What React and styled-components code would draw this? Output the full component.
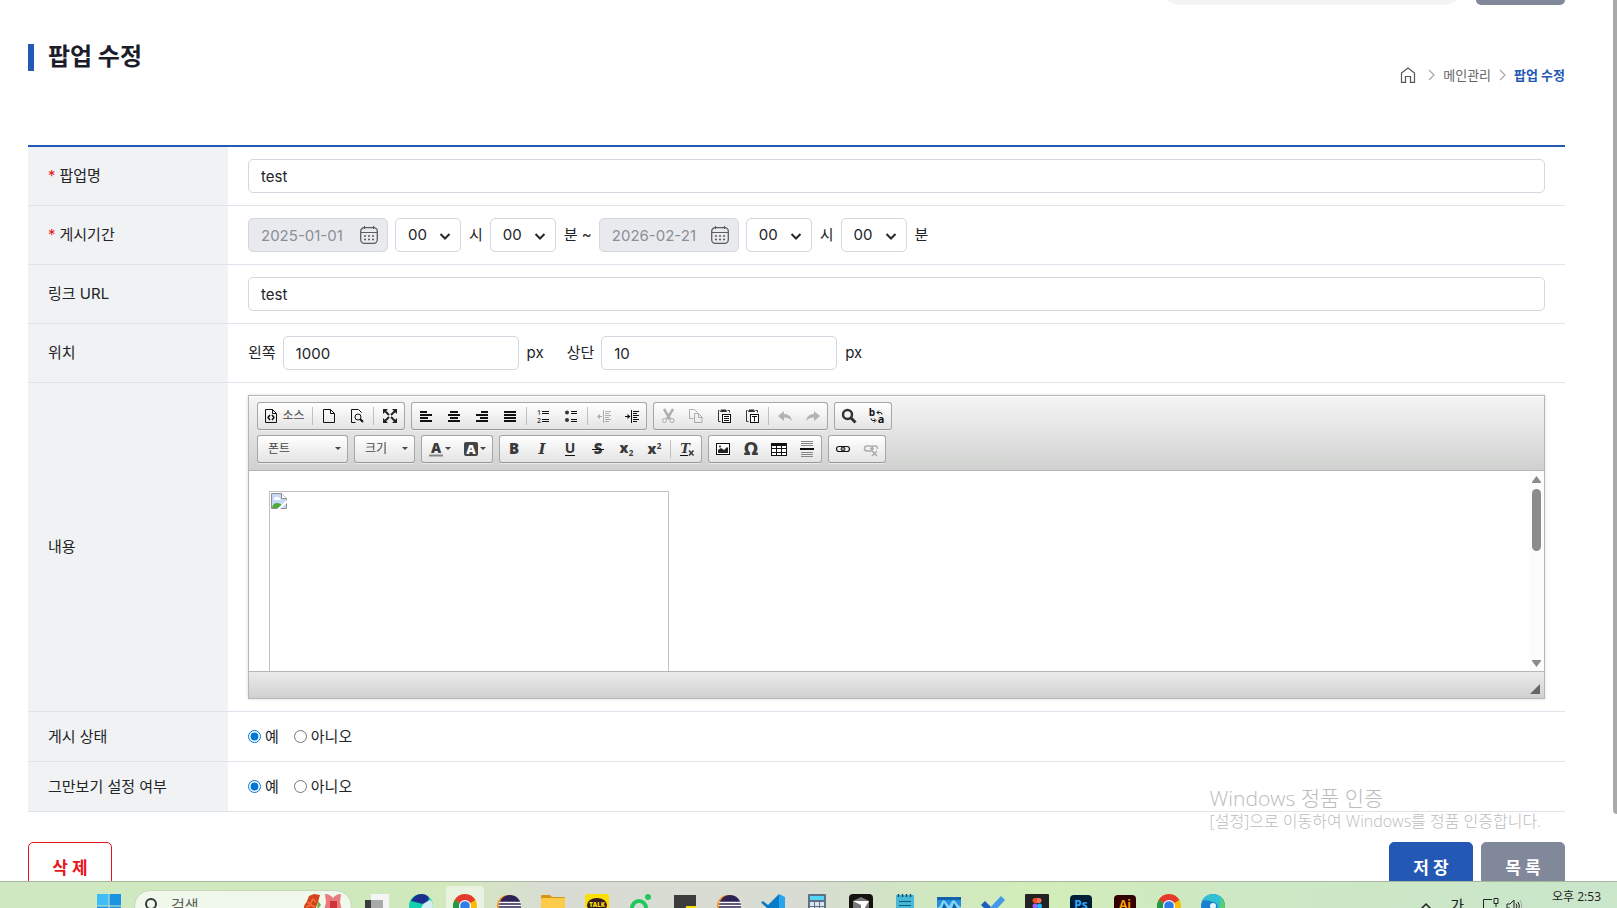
import React, { useState } from "react";
import styled, { createGlobalStyle, css } from "styled-components";

const color = {
    blue: "#2358b5",
    red: "#e8141c",
    slate: "#81889a",
    text: "#222428",
    line: "#dfe3ec",
    field: "#d2d6de",
    label: "#f1f2f4",
};

const Global = createGlobalStyle`
    *, *::before, *::after { box-sizing: border-box; }
    body {
        margin: 0;
        overflow: hidden;
        background: #fff;
        color: ${color.text};
        font-family: Inter, "Noto Sans CJK KR", sans-serif;
        font-size: 15px;
        line-height: 20px;
    }
    button, input, select { font: inherit; color: inherit; }
    svg { display: block; flex: none; overflow: visible; }
`;

/* ---------- page frame ---------- */

const Shell = styled.div`
    position: relative;
    height: 100vh;
    display: grid;
    grid-template-rows: minmax(0, 1fr) 27px;
`;

const Viewport = styled.div`
    display: flex;
    overflow: hidden;
`;

const Page = styled.main`
    flex: 1;
    min-width: 0;
    padding: 0 48px 0 28px;
`;

const PageScroll = styled.div`
    width: 4px;
    height: 814px;
    max-height: 93%;
    background: #a9a9a9;
    border-bottom-left-radius: 4px;
`;

const TopBar = styled.div`
    height: 5px;
    overflow: hidden;
    display: flex;
    justify-content: flex-end;
    align-items: flex-end;
    gap: 12px;
`;

const TopSearch = styled.div`
    flex: none;
    width: 304px;
    height: 40px;
    border-radius: 20px;
    background: #f3f4f6;
`;

const TopButton = styled.div`
    flex: none;
    width: 89px;
    height: 40px;
    border-radius: 5px;
    background: ${color.slate};
`;

const PageHead = styled.header`
    display: flex;
    justify-content: space-between;
    height: 140px;
    padding-top: 39px;
`;

const Title = styled.h1`
    height: 27px;
    margin: 0;
    padding-left: 14px;
    border-left: 6px solid ${color.blue};
    color: #1c1c2c;
    font-size: 24px;
    font-weight: 700;
    line-height: 25px;
`;

const Crumbs = styled.nav`
    display: flex;
    align-items: center;
    gap: 8px;
    height: 20px;
    margin-top: 21px;
    font-size: 13px;
    a {
        color: #666;
        text-decoration: none;
    }
    a:first-child { padding-right: 4px; }
    a[aria-current] {
        color: ${color.blue};
        font-weight: 700;
    }
`;

/* ---------- form ---------- */

const Form = styled.form`
    border-top: 2px solid ${color.blue};
`;

const Row = styled.div`
    display: grid;
    grid-template-columns: 200px minmax(0, 1fr);
    min-height: 50px;
    border-bottom: 1px solid ${color.line};
`;

const Head = styled.div`
    display: flex;
    align-items: center;
    padding: 0 20px;
    background: ${color.label};
    ${props => props.$required && css`
        &::before {
            content: "*";
            margin-right: 4px;
            color: ${color.red};
        }
    `}
`;

const Cell = styled.div`
    display: flex;
    align-items: center;
    padding: ${props => (props.$slim ? "0 20px" : "12px 20px")};
`;

const field = css`
    height: 34px;
    border: 1px solid ${color.field};
    border-radius: 5px;
    background: #fff;
    line-height: 20px;
    outline: none;
`;

const TextInput = styled.input`
    ${field};
    width: ${props => (props.$narrow ? "236px" : "100%")};
    padding: 0 12px;
`;

const DateBox = styled.div`
    ${field};
    display: flex;
    align-items: center;
    width: 140px;
    margin-right: 7px;
    padding: 0 9px 0 12px;
    background: #e9eaee;
    color: #8b8e96;
    input {
        flex: 1;
        min-width: 0;
        padding: 2px 0 0;
        border: 0;
        background: none;
        outline: none;
    }
`;

const SelectBox = styled.div`
    position: relative;
    select {
        ${field};
        width: 66px;
        padding: 0 12px;
        appearance: none;
    }
    svg {
        position: absolute;
        top: 12px;
        right: 10px;
        pointer-events: none;
    }
`;

const Unit = styled.span`
    margin: 0 7px 0 8px;
`;

const InputLabel = styled.label`
    margin-right: 7px;
    ${Unit} + & { margin-left: 16px; }
`;

const Radio = styled.label`
    display: flex;
    align-items: center;
    margin-right: 15px;
    input {
        width: 13px;
        height: 13px;
        margin: 0 4px 0 0;
        accent-color: #0078d4;
    }
`;

const Actions = styled.div`
    display: flex;
    gap: 8px;
    padding-top: 30px;
`;

const ActionButton = styled.button`
    width: 84px;
    height: 50px;
    padding: 2px 0 0;
    border: 1px solid ${props => (props.$outline ? color.red : props.$bg)};
    border-radius: 5px;
    background: ${props => (props.$outline ? "#fff" : props.$bg)};
    color: ${props => (props.$outline ? color.red : "#fff")};
    font-size: 17px;
    font-weight: 700;
    &:first-child { margin-right: auto; }
`;

/* ---------- editor ---------- */

const Editor = styled.div`
    flex: 1;
    min-width: 0;
    border: 1px solid #b6b6b6;
    box-shadow: 0 0 3px rgba(0, 0, 0, 0.15);
`;

const Toolbar = styled.div`
    display: flex;
    flex-direction: column;
    gap: 5px;
    padding: 6px 8px 7px;
    border-bottom: 1px solid #b6b6b6;
    background: linear-gradient(#f5f5f5, #cfd1cf);
    box-shadow: inset 0 1px 0 #fff;
`;

const ToolRow = styled.div`
    display: flex;
    gap: 6px;
`;

const ToolGroup = styled.div`
    display: flex;
    height: 28px;
    border: 1px solid #a6a6a6;
    border-bottom-color: #979797;
    border-radius: 3px;
    background: linear-gradient(#fff, #e4e4e4);
    box-shadow: 0 1px 0 rgba(255, 255, 255, 0.5);
`;

const toolButton = css`
    display: flex;
    align-items: center;
    padding: 0;
    border: 0;
    background: none;
    color: #474747;
    font-size: 12px;
`;

const Tool = styled.button`
    ${toolButton};
    justify-content: center;
    gap: ${props => props.$gap || 1}px;
    width: ${props => props.$width || 28}px;
    svg { opacity: ${props => (props.disabled ? 0.3 : 1)}; }
`;

const Combo = styled.button`
    ${toolButton};
    justify-content: space-between;
    width: ${props => props.$width}px;
    padding: 0 5px 0 10px;
`;

const Separator = styled.span`
    width: 1px;
    height: 18px;
    margin: 4px 2px;
    background: #c0c0c0;
`;

const EditorBody = styled.div`
    display: flex;
    height: 200px;
    overflow: hidden;
`;

const Document = styled.div`
    flex: 1;
    padding: 20px;
`;

const MissingImage = styled.div`
    width: 400px;
    height: 400px;
    padding: 1px;
    border: 1px solid #c0c0c0;
`;

const EditorScroll = styled.div`
    display: flex;
    flex-direction: column;
    align-items: center;
    width: 15px;
    padding: 5px 0 4px;
    background: #fcfcfc;
`;

const Thumb = styled.div`
    width: 9px;
    height: 62px;
    margin: 6px 0 auto;
    border-radius: 5px;
    background: #8b8b8b;
`;

const EditorFoot = styled.div`
    display: flex;
    justify-content: flex-end;
    align-items: flex-end;
    height: 27px;
    padding: 0 4px 4px;
    border-top: 1px solid #b6b6b6;
    background: linear-gradient(#ebebeb, #cfd1cf);
`;

/* ---------- desktop ---------- */

const Watermark = styled.div`
    position: absolute;
    right: 76px;
    bottom: 77px;
    color: #bcbcbc;
    font-family: "Open Sans", "Noto Sans CJK KR", sans-serif;
    font-size: 16px;
    font-weight: 300;
    line-height: 20px;
    pointer-events: none;
    strong {
        display: block;
        font-size: 21px;
        font-weight: 300;
        line-height: 26px;
    }
`;

const Taskbar = styled.footer`
    position: relative;
    overflow: hidden;
    border-top: 1px solid #a7b5a0;
    background: linear-gradient(90deg, #cfe8c2 0%, #cfe9bd 24%, #d3e8bd 28%, #d9dcd4 34%, #d8dcd2 50%, #d0e7c1 57%, #d3edb9 64%, #cde8c3 75%, #cae6cb 100%);
`;

const TaskRow = styled.div`
    display: flex;
    align-items: center;
    height: 48px;
    padding: 0 16px 0 97px;
`;

const TaskSearch = styled.label`
    display: flex;
    align-items: center;
    width: 218px;
    height: 32px;
    margin: 0 3px 0 13px;
    padding: 0 8px 0 10px;
    border: 1px solid #c6d6bd;
    border-radius: 16px;
    background: #f0f8ec;
    input {
        flex: 1;
        min-width: 0;
        padding: 0 0 0 12px;
        border: 0;
        background: none;
        outline: none;
    }
    input::placeholder { color: #5c5f5a; opacity: 1; }
`;

const TaskItem = styled.button`
    display: flex;
    align-items: center;
    justify-content: center;
    width: 38px;
    height: 40px;
    margin: 0 3px;
    padding: 0;
    border: 0;
    border-radius: 4px;
    background: ${props => (props.$active ? "rgba(255, 255, 255, 0.5)" : "none")};
`;

const Tray = styled.div`
    display: flex;
    align-items: center;
    gap: 18px;
    margin-left: auto;
    color: #1c1c1c;
`;

const TrayPair = styled.div`
    display: flex;
    gap: 7px;
`;

const Clock = styled.time`
    margin: 0 0 18px 12px;
    font-family: "Open Sans", "Noto Sans CJK KR", sans-serif;
    font-size: 12px;
    line-height: 16px;
`;

/* ---------- icons ---------- */

const bars = (rows) => rows.map(([x, width], i) => (
    <rect key={i} x={x} y={3 + i * 3} width={width} height="2" fill="#111" stroke="none" />
));

const letter = (char, props = {}) => (
    <text
        x="8"
        y="13"
        textAnchor="middle"
        fontFamily="Open Sans, sans-serif"
        fontSize="14"
        fontWeight="800"
        fill="#3a3a3a"
        stroke="none"
        {...props}
    >
        {char}
    </text>
);

const sheet = <path d="M2.500 1.500h7l4 4v9h-11z M9.500 1.500v4h4" />;
const clipboard = (
    <>
        <path d="M3.500 2.500h-1v11h2 M11.500 2.500h2v2" stroke="#333" />
        <path d="M5 1.500h5l1 2.500H4z" fill="#333" stroke="none" />
        <rect x="6.500" y="6.500" width="8" height="8" fill="#fff" />
    </>
);

const icons = {
    source: (
        <>
            {sheet}
            <path d="M7 7 5 9.500 7 12 M9 7l2 2.500L9 12" strokeWidth="1.500" />
        </>
    ),
    newpage: sheet,
    preview: (
        <>
            <path d="M12.500 4.500l-3-3h-7v13h4" />
            <circle cx="9" cy="9" r="3" />
            <path d="M11 11l3 3" strokeWidth="2" />
        </>
    ),
    maximize: (
        <>
            <path d="M1 1h5L1 6z M15 1h-5l5 5z M1 15h5l-5-5z M15 15h-5l5-5z" fill="#222" stroke="none" />
            <path d="M3 3l4 4 M13 3 9 7 M3 13l4-4 M13 13 9 9" strokeWidth="2" stroke="#222" />
        </>
    ),
    left: bars([[2, 7], [2, 12], [2, 8], [2, 12]]),
    center: bars([[4, 8], [2, 12], [4, 8], [2, 12]]),
    right: bars([[7, 7], [2, 12], [6, 8], [2, 12]]),
    justify: bars([[2, 12], [2, 12], [2, 12], [2, 12]]),
    numbered: (
        <>
            <path d="M7 3.500h7 M7 5.500h7 M7 11.500h7 M7 13.500h7" />
            {letter("1", { x: 4, y: 7, fontSize: 7, fontWeight: 600 })}
            {letter("2", { x: 4, y: 15, fontSize: 7, fontWeight: 600 })}
        </>
    ),
    bulleted: (
        <>
            <path d="M8 3.500h6 M8 5.500h6 M8 11.500h6 M8 13.500h6" />
            <circle cx="4" cy="4.500" r="2" fill="#333" stroke="none" />
            <circle cx="4" cy="12" r="2" fill="#333" stroke="none" />
        </>
    ),
    outdent: (
        <>
            <path d="M7.500 2v13 M9 3.500h6 M9 5.500h4 M9 7.500h6 M9 9.500h4 M9 11.500h6 M9 13.500h4 M2 8.500h4" />
            <path d="M1 8.500 4 6v5z" fill="#111" stroke="none" />
        </>
    ),
    indent: (
        <>
            <path d="M7.500 2v13 M9 3.500h6 M9 5.500h4 M9 7.500h6 M9 9.500h4 M9 11.500h6 M9 13.500h4 M1 8.500h4" />
            <path d="M6.500 8.500 3.500 6v5z" fill="#111" stroke="none" />
        </>
    ),
    cut: (
        <>
            <path d="M4 1l6 10 M13 1 7 11" strokeWidth="2.500" />
            <circle cx="4.500" cy="12.500" r="2" />
            <circle cx="12" cy="12.500" r="2" />
        </>
    ),
    copy: (
        <>
            <path d="M5.500 10.500h-4v-9h5l3 3" />
            <path d="M6.500 5.500h4l3.500 3.500v5.500H6.500z M10.500 5.500v4h4" />
        </>
    ),
    paste: (
        <>
            {clipboard}
            <path d="M8 8.500h5 M8 10.500h5 M8 12.500h5" />
        </>
    ),
    pastetext: (
        <>
            {clipboard}
            <path d="M8 8.500h5 M10.500 8.500v5" />
        </>
    ),
    undo: <path d="M1 8l6-5v3c4 0 7 2 8 7-2-3-5-3.500-8-3.500V13z" fill="#222" stroke="none" />,
    redo: <path d="M15 8 9 3v3c-4 0-7 2-8 7 2-3 5-3.500 8-3.500V13z" fill="#222" stroke="none" />,
    find: (
        <>
            <circle cx="6.500" cy="6.500" r="4.500" strokeWidth="2.500" stroke="#333" />
            <path d="M10 10l4.500 4.500" strokeWidth="3" stroke="#333" />
        </>
    ),
    replace: (
        <>
            {letter("b", { x: 3, y: 8, fontSize: 10, fontWeight: 700, fill: "#111" })}
            {letter("a", { x: 12, y: 15, fontSize: 11, fontWeight: 700, fill: "#111" })}
            <path d="M8 4.500h3q2 0 2 2 M10 2.500l-2 2 2 2 M2 10.500q0 2 2 2h2 M5 10.500l2 2-2 2" />
        </>
    ),
    textcolor: (
        <>
            {letter("A", { y: 12 })}
            <path d="M1 14.500h14" stroke="#888" strokeWidth="2" />
        </>
    ),
    bgcolor: (
        <>
            <rect x="1" y="1" width="14" height="14" rx="2" fill="#444" stroke="none" />
            {letter("A", { fill: "#fff", fontSize: 13 })}
        </>
    ),
    bold: letter("B", { fontSize: 15 }),
    italic: letter("I", { fontSize: 15, fontWeight: 700, fontFamily: "DejaVu Serif, serif", fontStyle: "italic" }),
    underline: (
        <>
            {letter("U", { y: 12, fontWeight: 700 })}
            <path d="M3 14.500h10" />
        </>
    ),
    strike: (
        <>
            {letter("S", { fontSize: 15 })}
            <path d="M2 8.500h12" />
        </>
    ),
    sub: (
        <>
            {letter("x", { x: 6, y: 12 })}
            {letter("2", { x: 13, y: 15, fontSize: 8, fontWeight: 700 })}
        </>
    ),
    sup: (
        <>
            {letter("x", { x: 6 })}
            {letter("2", { x: 13, y: 8, fontSize: 8, fontWeight: 700 })}
        </>
    ),
    clear: (
        <>
            {letter("T", { x: 6, y: 12, fontSize: 13, fontStyle: "italic", fontFamily: "DejaVu Serif, serif", fontWeight: 700 })}
            <path d="M1 14.500h8" />
            <path d="M10 9.500l4.500 5 M14.500 9.500l-4.500 5" stroke="#3a3a3a" strokeWidth="1.600" />
        </>
    ),
    image: (
        <>
            <rect x="1.500" y="2.500" width="13" height="11" fill="#fff" />
            <path d="M3 12V9l3-2 3 2 3-3 1 1v5z" fill="#222" stroke="none" />
            <circle cx="5" cy="5.500" r="1" fill="#222" stroke="none" />
        </>
    ),
    omega: letter("Ω", { y: 14, fontSize: 17, fontWeight: 700, fontFamily: "DejaVu Sans, sans-serif" }),
    table: (
        <>
            <rect x="0.500" y="2.500" width="15" height="12" fill="#fff" />
            <path d="M0 3.500h16" strokeWidth="3" />
            <path d="M5.500 3v11 M10.500 3v11 M1 7.500h14 M1 11.500h14" />
        </>
    ),
    rule: (
        <>
            <path d="M2 0.500h12 M2 2.500h12 M2 4.500h12 M2 11.500h12 M2 13.500h12 M2 15.500h12" stroke="#888" />
            <path d="M1 8h14" strokeWidth="2" />
        </>
    ),
    link: (
        <>
            <rect x="1.500" y="5.500" width="8" height="5" rx="2.500" strokeWidth="1.200" />
            <rect x="6.500" y="5.500" width="8" height="5" rx="2.500" strokeWidth="1.200" />
            <path d="M5 8h6" stroke="#777" />
        </>
    ),
    unlink: (
        <>
            <rect x="1.500" y="5" width="8" height="5" rx="2.500" strokeWidth="1.500" />
            <path d="M7 7.500h4 M9 5h3q2.500 0 2.500 3" strokeWidth="1.500" />
            <path d="M9 10l5 5 M14 10l-5 5" strokeWidth="1.500" />
        </>
    ),
};

const Icon = ({ name }) => (
    <svg width="16" height="16" viewBox="0 0 16 16" fill="none" stroke="#111">
        {icons[name]}
    </svg>
);

const Caret = () => (
    <svg width="7" height="4" viewBox="0 0 7 4"><path d="M0 0h6L3 3z" fill="#474747" /></svg>
);

const Calendar = () => (
    <svg width="18" height="18" viewBox="0 0 18 18" fill="none" stroke="#5d5d60">
        <rect x="0.700" y="1.700" width="16.600" height="15.600" rx="3.500" strokeWidth="1.300" />
        <path d="M1 6.500h16 M4.500 0v3 M13.500 0v3" strokeWidth="1.200" />
        <path d="M4 10h2 M8 10h2 M12 10h2 M4 13.500h2 M8 13.500h2 M12 13.500h2" strokeWidth="1.600" />
    </svg>
);

const Chevron = () => (
    <svg width="7" height="12" viewBox="0 0 7 12" fill="none" stroke="#aaa" strokeWidth="1.300">
        <path d="M1 1l5 5-5 5" />
    </svg>
);

const Home = () => (
    <svg width="16" height="16" viewBox="0 0 16 16" fill="none" stroke="#555" strokeWidth="1.200">
        <path d="M1.500 6 8 1l6.500 5v9.400h-4V9.500h-5v5.900h-4z" />
    </svg>
);

const BrokenImage = () => (
    <svg width="16" height="16" viewBox="0 0 16 16">
        <path d="M0.500 0.500h10l5 5v10H0.500z" fill="#c7d8f6" stroke="#8f8f8f" />
        <path d="M10.500 0.500v5h5" fill="#fff" stroke="#8f8f8f" />
        <path d="M3 6q0-2 2-2 2-1 3 1 2 0 1 2H3z" fill="#fff" />
        <path d="M1 15q1-5 5-5 3 0 5 2l-4 3z" fill="#4caa35" />
        <path d="M16 7 6 16h3l7-6z" fill="#fff" />
    </svg>
);

const chrome = (
    <>
        <circle cx="12" cy="12" r="12" fill="#fbbc05" />
        <path d="M12 12 1.600 6A12 12 0 0 1 22.400 6z" fill="#e33b2e" />
        <path d="M12 12 1.600 6A12 12 0 0 0 12 24z" fill="#279847" />
        <circle cx="12" cy="12" r="6" fill="#fff" />
        <circle cx="12" cy="12" r="4.800" fill="#2f7bea" />
    </>
);

const eclipse = (
    <>
        <circle cx="11" cy="12" r="11" fill="#f7941e" />
        <circle cx="13" cy="12" r="11" fill="#2c2255" />
        <path d="M2 8.500h22 M2 11.500h22 M2 14.500h22" stroke="#fff" strokeWidth="1.500" />
    </>
);

const adobe = (label, bg, fg) => (
    <>
        <rect x="1" y="1" width="22" height="22" rx="4" fill={bg} />
        <text x="12" y="15" textAnchor="middle" fontFamily="Open Sans, sans-serif" fontWeight="700" fontSize="12" fill={fg}>{label}</text>
    </>
);

const apps = [
    ["작업 보기", (
        <>
            <rect x="6" width="18" height="18" fill="#f5f5f5" />
            <rect y="6" width="18" height="18" fill="#3b3b3b" />
            <rect x="6" y="6" width="12" height="12" fill="#a9a9a9" />
        </>
    )],
    ["웨일", (
        <>
            <circle cx="12" cy="12" r="12" fill="#12cfae" />
            <path d="M2 7Q6 0 12 0q6 0 8 4-2 8-10 5-4-1-8-2z" fill="#1d2f8c" />
            <path d="M22 6q2 3 2 6-1 8-8 10l-4-6q0-7 10-10z" fill="#d4edf3" />
        </>
    )],
    ["Chrome", chrome],
    ["Eclipse", eclipse],
    ["파일 탐색기", (
        <>
            <path d="M0 2q0-1 1-1h8l2 2h12q1 0 1 1v6H0z" fill="#d99411" />
            <rect y="4" width="24" height="18" rx="1" fill="#fdcb4a" />
        </>
    )],
    ["카카오톡", (
        <>
            <rect width="24" height="24" rx="2" fill="#fbdf02" />
            <ellipse cx="12" cy="11" rx="10" ry="7" fill="#341c1e" />
            <text x="12" y="13" textAnchor="middle" fontFamily="Open Sans, sans-serif" fontWeight="800" fontSize="6" fill="#fbdf02">TALK</text>
        </>
    )],
    ["네이버 웍스", (
        <>
            <circle cx="10" cy="14" r="7" fill="none" stroke="#20c95b" strokeWidth="4" />
            <circle cx="19" cy="3" r="3" fill="#20c95b" />
        </>
    )],
    ["스티커 메모", (
        <>
            <rect x="1" y="1" width="22" height="22" fill="#3c3c3c" />
            <path d="M13 12h10v10H12z" fill="#fbdc00" />
        </>
    )],
    ["Eclipse 2", eclipse],
    ["VS Code", (
        <>
            <path d="M18 0 7 11 2 7 0 8.500 17 24l1-1z" fill="#0a7bc9" />
            <path d="M18 0l6 3v18l-6 3z" fill="#29a3ec" />
        </>
    )],
    ["계산기", (
        <>
            <rect x="3" width="18" height="24" rx="1" fill="#5c7187" />
            <rect x="5" y="2" width="14" height="4" fill="#53d6f5" />
            <path d="M7 8v12 M12 8v12 M17 8v12" stroke="#dde6ee" strokeWidth="4" strokeDasharray="4 1" />
        </>
    )],
    ["Cursor", (
        <>
            <rect width="24" height="24" rx="4" fill="#15130e" />
            <path d="M4 7l8-4 8 4v10l-8 4-8-4z" fill="#777" />
            <path d="M4 7h16l-8 13v-9z" fill="#fff" />
        </>
    )],
    ["메모장", (
        <>
            <rect x="3" y="1" width="18" height="23" fill="#48b8d8" />
            <path d="M5.500 0v3 M9.500 0v3 M13.500 0v3 M17.500 0v3" stroke="#114d63" strokeWidth="1.500" />
            <path d="M6 7.500h12 M6 11.500h12 M6 15.500h12" stroke="#115e79" />
        </>
    )],
    ["리소스 모니터", (
        <>
            <rect y="3" width="24" height="18" fill="#238ddd" />
            <path d="M0 3h24v3H0z" fill="#1462ad" />
            <path d="M0 14l3-2 2-5q2-2 4 1l3 4 3-5q2-2 4 1l2 3 3 2v8H0z" fill="#85d1f5" />
            <path d="M5 14l2-5 3 5z M15 14l2-5 3 5z" fill="#1462ad" />
        </>
    )],
    ["To Do", (
        <>
            <path d="M0 11l4-4 6 6-4 4z" fill="#1f5cbf" />
            <path d="M6 17 20 2l4 4L10 21z" fill="#4398ea" />
        </>
    )],
    ["Figma", (
        <>
            <rect width="24" height="24" rx="1" fill="#222" />
            <path d="M12 4h-2a2.500 2.500 0 0 0 0 5h2z" fill="#f24e1e" />
            <path d="M12 4h2a2.500 2.500 0 0 1 0 5h-2z" fill="#ff7262" />
            <path d="M12 9.500h-2a2.500 2.500 0 0 0 0 5h2z" fill="#a259ff" />
            <circle cx="14.500" cy="12" r="2.500" fill="#1abcfe" />
        </>
    )],
    ["Photoshop", adobe("Ps", "#001e36", "#31a8ff")],
    ["Illustrator", adobe("Ai", "#330000", "#ff9a00")],
    ["Chrome 2", chrome],
    ["Edge", (
        <>
            <circle cx="12" cy="12" r="12" fill="#1b7fd0" />
            <path d="M1 7Q5 0 12 0q10 1 12 10-1 6-8 6 2-7-4-8Q6 5 1 7z" fill="#2fc0d4" />
            <path d="M19 3q5 4 5 11-2 4-8 4 5-7 3-15z" fill="#58d06b" />
            <circle cx="12" cy="12" r="3" fill="#e4f4f6" />
        </>
    )],
];

/* ---------- pieces ---------- */

const TimeSelect = ({ label }) => (
    <SelectBox>
        <select aria-label={label} defaultValue="00">
            <option>00</option>
            <option>30</option>
        </select>
        <svg width="12" height="12" viewBox="0 0 12 12" fill="none" stroke="#25272b" strokeWidth="2">
            <path d="M1.500 4 6 8.500 10.500 4" />
        </svg>
    </SelectBox>
);

const DateField = ({ label, value }) => (
    <DateBox>
        <input aria-label={label} value={value} readOnly />
        <Calendar />
    </DateBox>
);

const YesNo = ({ name, label }) => {
    const [value, setValue] = useState("예");
    return (
        <Row role="radiogroup" aria-label={label}>
            <Head>{label}</Head>
            <Cell $slim>
                {["예", "아니오"].map(option => (
                    <Radio key={option}>
                        <input
                            type="radio"
                            name={name}
                            checked={value === option}
                            onChange={() => setValue(option)}
                        />
                        {option}
                    </Radio>
                ))}
            </Cell>
        </Row>
    );
};

const Tools = ({ names, disabled = [] }) => names.map((name, i) => (
    name === "|" ? <Separator key={i} /> : (
        <Tool key={i} type="button" aria-label={name} disabled={disabled.includes(name)}>
            <Icon name={name} />
        </Tool>
    )
));

const ContentEditor = () => (
    <Editor>
        <Toolbar>
            <ToolRow>
                <ToolGroup>
                    <Tool type="button" $width={52} $gap={3}>
                        <Icon name="source" />
                        소스
                    </Tool>
                    <Tools names={["|", "newpage", "preview", "|", "maximize"]} />
                </ToolGroup>
                <ToolGroup>
                    <Tools
                        names={["left", "center", "right", "justify", "|", "numbered", "bulleted", "|", "outdent", "indent"]}
                        disabled={["outdent"]}
                    />
                </ToolGroup>
                <ToolGroup>
                    <Tools
                        names={["cut", "copy", "paste", "pastetext", "|", "undo", "redo"]}
                        disabled={["cut", "copy", "undo", "redo"]}
                    />
                </ToolGroup>
                <ToolGroup>
                    <Tools names={["find", "replace"]} />
                </ToolGroup>
            </ToolRow>
            <ToolRow>
                <ToolGroup>
                    <Combo type="button" $width={89}>
                        폰트
                        <Caret />
                    </Combo>
                </ToolGroup>
                <ToolGroup>
                    <Combo type="button" $width={59}>
                        크기
                        <Caret />
                    </Combo>
                </ToolGroup>
                <ToolGroup>
                    {["textcolor", "bgcolor"].map(name => (
                        <Tool key={name} type="button" aria-label={name} $width={35}>
                            <Icon name={name} />
                            <Caret />
                        </Tool>
                    ))}
                </ToolGroup>
                <ToolGroup>
                    <Tools names={["bold", "italic", "underline", "strike", "sub", "sup", "|", "clear"]} />
                </ToolGroup>
                <ToolGroup>
                    <Tools names={["image", "omega", "table", "rule"]} />
                </ToolGroup>
                <ToolGroup>
                    <Tools names={["link", "unlink"]} disabled={["unlink"]} />
                </ToolGroup>
            </ToolRow>
        </Toolbar>
        <EditorBody>
            <Document>
                <MissingImage><BrokenImage /></MissingImage>
            </Document>
            <EditorScroll>
                <svg width="9" height="7" viewBox="0 0 9 7"><path d="M4.500 0 9 6v1H0V6z" fill="#8b8b8b" /></svg>
                <Thumb />
                <svg width="9" height="7" viewBox="0 0 9 7"><path d="M4.500 7 9 1V0H0v1z" fill="#8b8b8b" /></svg>
            </EditorScroll>
        </EditorBody>
        <EditorFoot>
            <svg width="10" height="10" viewBox="0 0 10 10"><path d="M10 0v10H0z" fill="#666" /></svg>
        </EditorFoot>
    </Editor>
);

const Desktop = () => (
    <Taskbar>
        <TaskRow>
            <svg width="24" height="24" viewBox="0 0 24 24" fill="#1b93e3">
                <path d="M0 0h11.500v11.500H0z" fill="#3fbdf6" />
                <path d="M12.500 0H24v11.500H12.500z M0 12.500h11.500V24H0z M12.500 12.500H24V24H12.500z" />
            </svg>
            <TaskSearch>
                <svg width="14" height="16" viewBox="0 0 14 16" fill="none" stroke="#33363a" strokeWidth="2">
                    <circle cx="6" cy="6" r="5" />
                    <path d="M9 10l3 4" />
                </svg>
                <input aria-label="검색" placeholder="검색" />
                <svg width="40" height="24" viewBox="0 0 40 24">
                    <path d="M1 12 4 7l2-5 5-2 6 1-2 7-3 8H1z" fill="#d4431c" />
                    <path d="M4 8l3 2 3-5 3 3 M3 13l5-2 4 2" stroke="#f4733d" strokeWidth="1.500" fill="none" />
                    <path d="M15 7l3 4-4 5z" fill="#63ad3e" />
                    <path d="M22 0q5 0 8 4 3-4 8-4l-1 8 2 9H21l2-9z" fill="#e97b7f" />
                    <path d="M27 7h7v12h-7z" fill="#cf343d" />
                </svg>
            </TaskSearch>
            {apps.map(([name, art]) => (
                <TaskItem key={name} type="button" aria-label={name} $active={name === "Chrome"}>
                    <svg width="24" height="24" viewBox="0 0 24 24">{art}</svg>
                </TaskItem>
            ))}
            <Tray>
                <svg width="12" height="7" viewBox="0 0 12 7" fill="none" stroke="#222" strokeWidth="1.500">
                    <path d="M1 6l5-5 5 5" />
                </svg>
                <span>가</span>
                <TrayPair>
                    <svg width="17" height="16" viewBox="0 0 17 16" fill="none" stroke="#222">
                        <path d="M10 1.500H1.500v11h12V10 M12 0.500h4v5h-4z M14 5.500V9" />
                    </svg>
                    <svg width="16" height="16" viewBox="0 0 16 16" fill="none" stroke="#222">
                        <path d="M1 6h3l4-4v12l-4-4H1z M10 5.500q2 2.500 0 5 M12 4q3 4 0 8" />
                        <path d="M14 2q3.500 6 0 12" stroke="#aaa" />
                    </svg>
                </TrayPair>
                <Clock>오후 2:53</Clock>
            </Tray>
        </TaskRow>
    </Taskbar>
);

export default function App() {
    return (
        <Shell>
            <Global />
            <Viewport>
                <Page>
                    <TopBar>
                        <TopSearch />
                        <TopButton />
                    </TopBar>
                    <PageHead>
                        <Title>팝업 수정</Title>
                        <Crumbs>
                            <a href="#home" aria-label="홈"><Home /></a>
                            <Chevron />
                            <a href="#main">메인관리</a>
                            <Chevron />
                            <a href="#popup" aria-current="page">팝업 수정</a>
                        </Crumbs>
                    </PageHead>
                    <Form onSubmit={e => e.preventDefault()}>
                        <Row>
                            <Head as="label" htmlFor="name" $required>팝업명</Head>
                            <Cell><TextInput id="name" defaultValue="test" /></Cell>
                        </Row>
                        <Row>
                            <Head $required>게시기간</Head>
                            <Cell>
                                <DateField label="시작일" value="2025-01-01" />
                                <TimeSelect label="시작 시" />
                                <Unit>시</Unit>
                                <TimeSelect label="시작 분" />
                                <Unit>분 ~</Unit>
                                <DateField label="종료일" value="2026-02-21" />
                                <TimeSelect label="종료 시" />
                                <Unit>시</Unit>
                                <TimeSelect label="종료 분" />
                                <Unit>분</Unit>
                            </Cell>
                        </Row>
                        <Row>
                            <Head as="label" htmlFor="url">링크 URL</Head>
                            <Cell><TextInput id="url" defaultValue="test" /></Cell>
                        </Row>
                        <Row>
                            <Head>위치</Head>
                            <Cell>
                                <InputLabel htmlFor="left">왼쪽</InputLabel>
                                <TextInput id="left" $narrow defaultValue="1000" />
                                <Unit>px</Unit>
                                <InputLabel htmlFor="top">상단</InputLabel>
                                <TextInput id="top" $narrow defaultValue="10" />
                                <Unit>px</Unit>
                            </Cell>
                        </Row>
                        <Row>
                            <Head>내용</Head>
                            <Cell><ContentEditor /></Cell>
                        </Row>
                        <YesNo name="status" label="게시 상태" />
                        <YesNo name="dismiss" label="그만보기 설정 여부" />
                        <Actions>
                            <ActionButton type="button" $outline>삭 제</ActionButton>
                            <ActionButton type="submit" $bg={color.blue}>저 장</ActionButton>
                            <ActionButton type="button" $bg={color.slate}>목 록</ActionButton>
                        </Actions>
                    </Form>
                </Page>
                <PageScroll />
            </Viewport>
            <Desktop />
            <Watermark>
                <strong>Windows 정품 인증</strong>
                [설정]으로 이동하여 Windows를 정품 인증합니다.
            </Watermark>
        </Shell>
    );
}
